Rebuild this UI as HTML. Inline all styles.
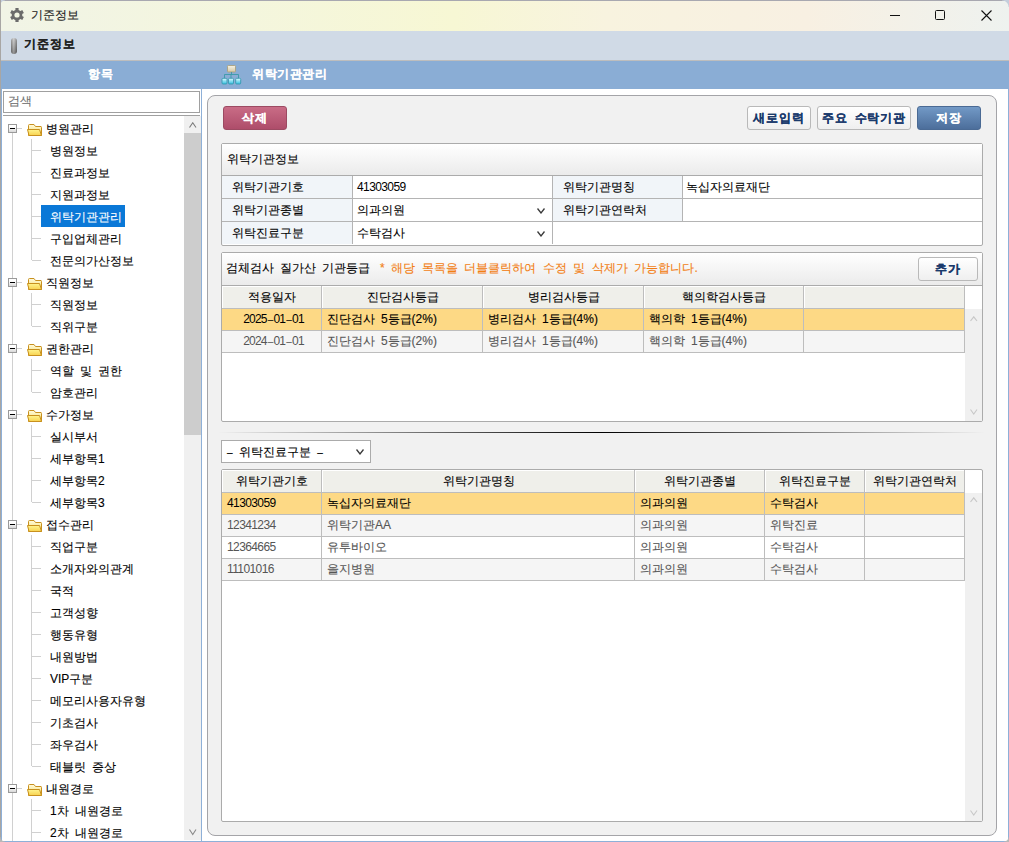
<!DOCTYPE html>
<html><head><meta charset="utf-8"><style>
*{margin:0;padding:0;box-sizing:border-box}
html,body{width:1009px;height:842px;overflow:hidden;background:#fff}
body{position:relative;font-family:"Liberation Sans",sans-serif;font-size:12px;color:#000;word-spacing:2.6px}
.a{position:absolute}
.t{position:absolute;white-space:nowrap;line-height:14px;-webkit-text-stroke:0.12px currentColor}
.b{font-weight:bold;letter-spacing:0.5px}
.btn{position:absolute;height:24px;border-radius:3px;font-weight:bold;text-align:center;line-height:22px;white-space:nowrap;letter-spacing:0.8px;-webkit-text-stroke:0.2px currentColor}
.bw{background:linear-gradient(#ffffff,#efefef);border:1px solid #b9b9b9;color:#1a3a6c}
.lbl{position:absolute;background:#f1f5f9}
.hl{position:absolute;background:#b4b4b4}
.gh{position:absolute;background:#efefea;border-top:1px solid #fff;border-left:1px solid #fff}
.c{text-align:center}
.num{letter-spacing:-0.6px;-webkit-text-stroke:0}
.dt{letter-spacing:-0.8px;-webkit-text-stroke:0}
.hy{font-size:10px;vertical-align:0.5px}
.dt .hy{margin:0 1px}
</style></head><body>
<div class="a" style="left:0px;top:0px;width:1009px;height:31px;background:linear-gradient(90deg,#f1f4e6 0%,#f4f6dd 25%,#f7f7d4 45%,#f8f3df 60%,#f8f0e2 80%,#eef2ef 100%);"></div>
<div class="a" style="left:0px;top:0px;width:1009px;height:1px;background:#a8a8b0;"></div>
<div class="a" style="left:0;top:0;width:5px;height:5px;background:radial-gradient(circle at 5px 5px,transparent 4px,#c4cedc 5px)"></div>
<div class="a" style="left:1002px;top:0;width:7px;height:7px;background:radial-gradient(circle at 0 7px,transparent 6px,#c4cedc 7px)"></div>
<div class="a" style="left:0px;top:31px;width:1009px;height:29px;background:#d0dae6;"></div>
<div class="a" style="left:0px;top:60px;width:1009px;height:1px;background:#bdbdbd;"></div>
<div class="a" style="left:0px;top:61px;width:1009px;height:28px;background:#8aadd5;"></div>
<div class="a" style="left:0px;top:89px;width:201px;height:752px;background:#fff;"></div>
<div class="a" style="left:3px;top:91px;width:197px;height:22px;background:#fff;border:1px solid #a0a0a0"></div>
<div class="a" style="left:3px;top:115px;width:197px;height:1px;background:#a0a0a0;"></div>
<div class="a" style="left:184px;top:116px;width:17px;height:724px;background:#f0f0f0;"></div>
<div class="a" style="left:184px;top:133px;width:17px;height:302px;background:#cdcdcd;"></div>
<div class="a" style="left:201px;top:89px;width:1px;height:752px;background:#8eb0d8;"></div>
<div class="a" style="left:202px;top:89px;width:806px;height:752px;background:#fff;"></div>
<div class="a" style="left:207px;top:95px;width:790px;height:741px;background:#f1f1f1;border:1px solid #a4a4a8;border-radius:8px"></div>
<div class="a" style="left:0px;top:0px;width:1px;height:842px;background:#a8a6a4;"></div>
<div class="a" style="left:1px;top:89px;width:1px;height:752px;background:#8eb0d8;"></div>
<div class="a" style="left:0px;top:841px;width:1009px;height:1px;background:#8eb0d8;"></div>
<div class="a" style="left:1008px;top:89px;width:1px;height:753px;background:#8eb0d8;"></div>
<div class="a" style="left:1004px;top:837px;width:5px;height:5px;background:radial-gradient(circle at 0 0,transparent 4px,#b8b8b8 5px)"></div>
<div class="a" style="left:0;top:837px;width:5px;height:5px;background:radial-gradient(circle at 5px 0,transparent 4px,#b8b8b8 5px)"></div>
<div class="t " style="left:31px;top:8px;color:#1a1a1a">기준정보</div>
<div class="t b" style="left:24px;top:37px;color:#222;letter-spacing:1px">기준정보</div>
<div class="t c b" style="left:0px;top:67px;width:201px;color:#fff">항목</div>
<div class="t b" style="left:252px;top:67px;color:#fff">위탁기관관리</div>
<div class="t " style="left:8px;top:94px;color:#707070">검색</div>
<div class="btn" style="left:223px;top:106px;width:64px;background:linear-gradient(#c96c86,#ae4d6a);border:1px solid #9c4a62;color:#fff">삭제</div>
<div class="btn bw" style="left:747px;top:106px;width:64px">새로입력</div>
<div class="btn bw" style="left:817px;top:106px;width:94px">주요 수탁기관</div>
<div class="btn" style="left:917px;top:106px;width:64px;background:linear-gradient(#7299c6,#4c6e9b);border:1px solid #4a6a94;color:#fff">저장</div>
<div class="a" style="left:221px;top:143px;width:762px;height:103px;background:#fff;border:1px solid #ababab;border-radius:2px"></div>
<div class="a" style="left:222px;top:144px;width:760px;height:31px;background:linear-gradient(#ffffff,#ebebeb);"></div>
<div class="a" style="left:222px;top:175px;width:760px;height:1px;background:#ababab;"></div>
<div class="t " style="left:227px;top:152px;">위탁기관정보</div>
<div class="a" style="left:222px;top:176px;width:130px;height:68px;background:#f1f5f9;"></div>
<div class="a" style="left:553px;top:176px;width:129px;height:45px;background:#f1f5f9;"></div>
<div class="a" style="left:222px;top:198px;width:760px;height:1px;background:#b4b4b4;"></div>
<div class="a" style="left:222px;top:221px;width:760px;height:1px;background:#b4b4b4;"></div>
<div class="a" style="left:352px;top:176px;width:1px;height:68px;background:#b4b4b4;"></div>
<div class="a" style="left:552px;top:176px;width:1px;height:68px;background:#b4b4b4;"></div>
<div class="a" style="left:682px;top:176px;width:1px;height:45px;background:#b4b4b4;"></div>
<div class="t " style="left:232px;top:180px;">위탁기관기호</div>
<div class="t num" style="left:357px;top:180px;">41303059</div>
<div class="t " style="left:563px;top:180px;">위탁기관명칭</div>
<div class="t " style="left:686px;top:180px;">녹십자의료재단</div>
<div class="t " style="left:232px;top:203px;">위탁기관종별</div>
<div class="t " style="left:357px;top:203px;">의과의원</div>
<div class="t " style="left:563px;top:203px;">위탁기관연락처</div>
<div class="t " style="left:232px;top:226px;">위탁진료구분</div>
<div class="t " style="left:357px;top:226px;">수탁검사</div>
<svg class="a" style="left:537px;top:208px" width="8" height="6" viewBox="0 0 8 6"><path d="M0.5 0.5 L4.0 5 L7.5 0.5" fill="none" stroke="#3a3a3a" stroke-width="1.3"/></svg>
<svg class="a" style="left:537px;top:231px" width="8" height="6" viewBox="0 0 8 6"><path d="M0.5 0.5 L4.0 5 L7.5 0.5" fill="none" stroke="#3a3a3a" stroke-width="1.3"/></svg>
<div class="a" style="left:221px;top:252px;width:762px;height:170px;background:#fff;border:1px solid #ababab;border-radius:2px"></div>
<div class="a" style="left:222px;top:253px;width:760px;height:32px;background:linear-gradient(#ffffff,#ebebeb);"></div>
<div class="a" style="left:222px;top:285px;width:760px;height:1px;background:#ababab;"></div>
<div class="t " style="left:226px;top:261px;">검체검사 질가산 기관등급</div>
<div class="t " style="left:380px;top:261px;color:#f27e14;word-spacing:3.2px">* 해당 목록을 더블클릭하여 수정 및 삭제가 가능합니다.</div>
<div class="btn bw" style="left:918px;top:257px;width:60px">추가</div>
<div class="gh" style="left:222px;top:286px;width:99px;height:22px"></div>
<div class="gh" style="left:322px;top:286px;width:160px;height:22px"></div>
<div class="gh" style="left:483px;top:286px;width:160px;height:22px"></div>
<div class="gh" style="left:644px;top:286px;width:159px;height:22px"></div>
<div class="gh" style="left:804px;top:286px;width:160px;height:22px"></div>
<div class="a" style="left:321px;top:286px;width:1px;height:67px;background:#bdbdbd;"></div>
<div class="a" style="left:482px;top:286px;width:1px;height:67px;background:#bdbdbd;"></div>
<div class="a" style="left:643px;top:286px;width:1px;height:67px;background:#bdbdbd;"></div>
<div class="a" style="left:803px;top:286px;width:1px;height:67px;background:#bdbdbd;"></div>
<div class="a" style="left:964px;top:286px;width:1px;height:67px;background:#bdbdbd;"></div>
<div class="a" style="left:222px;top:308px;width:743px;height:1px;background:#bdbdbd;"></div>
<div class="a" style="left:222px;top:309px;width:743px;height:21px;background:#fdd985;"></div>
<div class="a" style="left:222px;top:330px;width:743px;height:1px;background:#bdbdbd;"></div>
<div class="a" style="left:222px;top:331px;width:743px;height:21px;background:#f5f5f5;"></div>
<div class="a" style="left:222px;top:352px;width:743px;height:1px;background:#bdbdbd;"></div>
<div class="a" style="left:321px;top:309px;width:1px;height:43px;background:#bdbdbd;"></div>
<div class="a" style="left:482px;top:309px;width:1px;height:43px;background:#bdbdbd;"></div>
<div class="a" style="left:643px;top:309px;width:1px;height:43px;background:#bdbdbd;"></div>
<div class="a" style="left:803px;top:309px;width:1px;height:43px;background:#bdbdbd;"></div>
<div class="a" style="left:964px;top:309px;width:1px;height:43px;background:#bdbdbd;"></div>
<div class="a" style="left:965px;top:309px;width:17px;height:112px;background:#f0f0f0;"></div>
<div class="t c " style="left:222px;top:290px;width:100px;">적용일자</div>
<div class="t c " style="left:322px;top:290px;width:161px;">진단검사등급</div>
<div class="t c " style="left:483px;top:290px;width:161px;">병리검사등급</div>
<div class="t c " style="left:644px;top:290px;width:160px;">핵의학검사등급</div>
<div class="t c " style="left:804px;top:290px;width:161px;"></div>
<div class="t c dt" style="left:223px;top:312px;width:101px;">2025<span class="hy">–</span>01<span class="hy">–</span>01</div>
<div class="t " style="left:327px;top:312px;">진단검사 5등급(2%)</div>
<div class="t " style="left:488px;top:312px;">병리검사 1등급(4%)</div>
<div class="t " style="left:649px;top:312px;">핵의학 1등급(4%)</div>
<div class="t c dt" style="left:223px;top:334px;width:101px;color:#555">2024<span class="hy">–</span>01<span class="hy">–</span>01</div>
<div class="t " style="left:327px;top:334px;color:#555">진단검사 5등급(2%)</div>
<div class="t " style="left:488px;top:334px;color:#555">병리검사 1등급(4%)</div>
<div class="t " style="left:649px;top:334px;color:#555">핵의학 1등급(4%)</div>
<div class="a" style="left:218px;top:432px;width:767px;height:1px;background:linear-gradient(90deg,rgba(0,0,0,0),#000 50%,rgba(0,0,0,0));"></div>
<div class="a" style="left:221px;top:440px;width:150px;height:23px;background:#fff;border:1px solid #ababab"></div>
<div class="t " style="left:227px;top:445px;word-spacing:3px"><span class="hy">–</span> 위탁진료구분 <span class="hy">–</span></div>
<svg class="a" style="left:356px;top:449px" width="8" height="6" viewBox="0 0 8 6"><path d="M0.5 0.5 L4.0 5 L7.5 0.5" fill="none" stroke="#3a3a3a" stroke-width="1.3"/></svg>
<div class="a" style="left:221px;top:469px;width:762px;height:353px;background:#fff;border:1px solid #ababab;border-radius:2px"></div>
<div class="gh" style="left:222px;top:470px;width:99px;height:22px"></div>
<div class="gh" style="left:322px;top:470px;width:312px;height:22px"></div>
<div class="gh" style="left:635px;top:470px;width:129px;height:22px"></div>
<div class="gh" style="left:765px;top:470px;width:99px;height:22px"></div>
<div class="gh" style="left:865px;top:470px;width:99px;height:22px"></div>
<div class="a" style="left:321px;top:470px;width:1px;height:111px;background:#bdbdbd;"></div>
<div class="a" style="left:634px;top:470px;width:1px;height:111px;background:#bdbdbd;"></div>
<div class="a" style="left:764px;top:470px;width:1px;height:111px;background:#bdbdbd;"></div>
<div class="a" style="left:864px;top:470px;width:1px;height:111px;background:#bdbdbd;"></div>
<div class="a" style="left:964px;top:470px;width:1px;height:111px;background:#bdbdbd;"></div>
<div class="a" style="left:222px;top:492px;width:743px;height:1px;background:#bdbdbd;"></div>
<div class="a" style="left:222px;top:493px;width:743px;height:21px;background:#fdd985;"></div>
<div class="a" style="left:222px;top:514px;width:743px;height:1px;background:#bdbdbd;"></div>
<div class="a" style="left:222px;top:515px;width:743px;height:21px;background:#f5f5f5;"></div>
<div class="a" style="left:222px;top:536px;width:743px;height:1px;background:#bdbdbd;"></div>
<div class="a" style="left:222px;top:537px;width:743px;height:21px;background:#ffffff;"></div>
<div class="a" style="left:222px;top:558px;width:743px;height:1px;background:#bdbdbd;"></div>
<div class="a" style="left:222px;top:559px;width:743px;height:21px;background:#f5f5f5;"></div>
<div class="a" style="left:222px;top:580px;width:743px;height:1px;background:#bdbdbd;"></div>
<div class="a" style="left:321px;top:493px;width:1px;height:88px;background:#bdbdbd;"></div>
<div class="a" style="left:634px;top:493px;width:1px;height:88px;background:#bdbdbd;"></div>
<div class="a" style="left:764px;top:493px;width:1px;height:88px;background:#bdbdbd;"></div>
<div class="a" style="left:864px;top:493px;width:1px;height:88px;background:#bdbdbd;"></div>
<div class="a" style="left:964px;top:493px;width:1px;height:88px;background:#bdbdbd;"></div>
<div class="t c " style="left:222px;top:474px;width:100px;">위탁기관기호</div>
<div class="t c " style="left:322px;top:474px;width:313px;">위탁기관명칭</div>
<div class="t c " style="left:635px;top:474px;width:130px;">위탁기관종별</div>
<div class="t c " style="left:765px;top:474px;width:100px;">위탁진료구분</div>
<div class="t c " style="left:865px;top:474px;width:100px;">위탁기관연락처</div>
<div class="t num" style="left:227px;top:496px;">41303059</div>
<div class="t " style="left:327px;top:496px;">녹십자의료재단</div>
<div class="t " style="left:640px;top:496px;">의과의원</div>
<div class="t " style="left:770px;top:496px;">수탁검사</div>
<div class="t num" style="left:227px;top:518px;color:#555">12341234</div>
<div class="t " style="left:327px;top:518px;color:#555">위탁기관AA</div>
<div class="t " style="left:640px;top:518px;color:#555">의과의원</div>
<div class="t " style="left:770px;top:518px;color:#555">위탁진료</div>
<div class="t num" style="left:227px;top:540px;color:#555">12364665</div>
<div class="t " style="left:327px;top:540px;color:#555">유투바이오</div>
<div class="t " style="left:640px;top:540px;color:#555">의과의원</div>
<div class="t " style="left:770px;top:540px;color:#555">수탁검사</div>
<div class="t num" style="left:227px;top:562px;color:#555">11101016</div>
<div class="t " style="left:327px;top:562px;color:#555">을지병원</div>
<div class="t " style="left:640px;top:562px;color:#555">의과의원</div>
<div class="t " style="left:770px;top:562px;color:#555">수탁검사</div>
<div class="a" style="left:965px;top:493px;width:17px;height:328px;background:#f0f0f0;"></div>
<svg width="0" height="0" style="position:absolute"><defs><linearGradient id="fb" x1="0" y1="0" x2="0" y2="1"><stop offset="0" stop-color="#fffbe0"/><stop offset="1" stop-color="#f6dc60"/></linearGradient><linearGradient id="ff" x1="0" y1="0" x2="0" y2="1"><stop offset="0" stop-color="#fff48e"/><stop offset="1" stop-color="#f7d250"/></linearGradient></defs></svg>
<div class="a" style="left:12px;top:133px;width:1px;height:708px;background:#d0d0d0;"></div>
<div class="a" style="left:8px;top:124px;width:9px;height:9px;border:1px solid #9a9a9a;background:linear-gradient(#fff 30%,#d8d8d8)"></div>
<div class="a" style="left:10px;top:128px;width:5px;height:1px;background:#000;"></div>
<div class="a" style="left:17px;top:128px;width:5px;height:1px;background:#d0d0d0;"></div>
<svg class="a" style="left:27px;top:123px" width="16" height="14" viewBox="0 0 16 14"><path d="M1.5 12.5 V2.5 Q1.5 1.5 2.5 1.5 H7 L8.5 3.5 H14 Q14.5 3.5 14.5 4.5 V12.5 Z" fill="url(#fb)" stroke="#c8901e" stroke-width="1"/><path d="M0.5 6.5 H12.5 L14.5 12.5 H2 Z" fill="url(#ff)" stroke="#c8901e" stroke-width="1" stroke-linejoin="round"/></svg>
<div class="a" style="left:31px;top:139px;width:1px;height:121px;background:#d0d0d0;"></div>
<div class="a" style="left:32px;top:150px;width:9px;height:1px;background:#d0d0d0;"></div>
<div class="a" style="left:32px;top:172px;width:9px;height:1px;background:#d0d0d0;"></div>
<div class="a" style="left:32px;top:194px;width:9px;height:1px;background:#d0d0d0;"></div>
<div class="a" style="left:32px;top:216px;width:9px;height:1px;background:#d0d0d0;"></div>
<div class="a" style="left:32px;top:238px;width:9px;height:1px;background:#d0d0d0;"></div>
<div class="a" style="left:32px;top:260px;width:9px;height:1px;background:#d0d0d0;"></div>
<div class="a" style="left:8px;top:278px;width:9px;height:9px;border:1px solid #9a9a9a;background:linear-gradient(#fff 30%,#d8d8d8)"></div>
<div class="a" style="left:10px;top:282px;width:5px;height:1px;background:#000;"></div>
<div class="a" style="left:17px;top:282px;width:5px;height:1px;background:#d0d0d0;"></div>
<svg class="a" style="left:27px;top:277px" width="16" height="14" viewBox="0 0 16 14"><path d="M1.5 12.5 V2.5 Q1.5 1.5 2.5 1.5 H7 L8.5 3.5 H14 Q14.5 3.5 14.5 4.5 V12.5 Z" fill="url(#fb)" stroke="#c8901e" stroke-width="1"/><path d="M0.5 6.5 H12.5 L14.5 12.5 H2 Z" fill="url(#ff)" stroke="#c8901e" stroke-width="1" stroke-linejoin="round"/></svg>
<div class="a" style="left:31px;top:293px;width:1px;height:33px;background:#d0d0d0;"></div>
<div class="a" style="left:32px;top:304px;width:9px;height:1px;background:#d0d0d0;"></div>
<div class="a" style="left:32px;top:326px;width:9px;height:1px;background:#d0d0d0;"></div>
<div class="a" style="left:8px;top:344px;width:9px;height:9px;border:1px solid #9a9a9a;background:linear-gradient(#fff 30%,#d8d8d8)"></div>
<div class="a" style="left:10px;top:348px;width:5px;height:1px;background:#000;"></div>
<div class="a" style="left:17px;top:348px;width:5px;height:1px;background:#d0d0d0;"></div>
<svg class="a" style="left:27px;top:343px" width="16" height="14" viewBox="0 0 16 14"><path d="M1.5 12.5 V2.5 Q1.5 1.5 2.5 1.5 H7 L8.5 3.5 H14 Q14.5 3.5 14.5 4.5 V12.5 Z" fill="url(#fb)" stroke="#c8901e" stroke-width="1"/><path d="M0.5 6.5 H12.5 L14.5 12.5 H2 Z" fill="url(#ff)" stroke="#c8901e" stroke-width="1" stroke-linejoin="round"/></svg>
<div class="a" style="left:31px;top:359px;width:1px;height:33px;background:#d0d0d0;"></div>
<div class="a" style="left:32px;top:370px;width:9px;height:1px;background:#d0d0d0;"></div>
<div class="a" style="left:32px;top:392px;width:9px;height:1px;background:#d0d0d0;"></div>
<div class="a" style="left:8px;top:410px;width:9px;height:9px;border:1px solid #9a9a9a;background:linear-gradient(#fff 30%,#d8d8d8)"></div>
<div class="a" style="left:10px;top:414px;width:5px;height:1px;background:#000;"></div>
<div class="a" style="left:17px;top:414px;width:5px;height:1px;background:#d0d0d0;"></div>
<svg class="a" style="left:27px;top:409px" width="16" height="14" viewBox="0 0 16 14"><path d="M1.5 12.5 V2.5 Q1.5 1.5 2.5 1.5 H7 L8.5 3.5 H14 Q14.5 3.5 14.5 4.5 V12.5 Z" fill="url(#fb)" stroke="#c8901e" stroke-width="1"/><path d="M0.5 6.5 H12.5 L14.5 12.5 H2 Z" fill="url(#ff)" stroke="#c8901e" stroke-width="1" stroke-linejoin="round"/></svg>
<div class="a" style="left:31px;top:425px;width:1px;height:77px;background:#d0d0d0;"></div>
<div class="a" style="left:32px;top:436px;width:9px;height:1px;background:#d0d0d0;"></div>
<div class="a" style="left:32px;top:458px;width:9px;height:1px;background:#d0d0d0;"></div>
<div class="a" style="left:32px;top:480px;width:9px;height:1px;background:#d0d0d0;"></div>
<div class="a" style="left:32px;top:502px;width:9px;height:1px;background:#d0d0d0;"></div>
<div class="a" style="left:8px;top:520px;width:9px;height:9px;border:1px solid #9a9a9a;background:linear-gradient(#fff 30%,#d8d8d8)"></div>
<div class="a" style="left:10px;top:524px;width:5px;height:1px;background:#000;"></div>
<div class="a" style="left:17px;top:524px;width:5px;height:1px;background:#d0d0d0;"></div>
<svg class="a" style="left:27px;top:519px" width="16" height="14" viewBox="0 0 16 14"><path d="M1.5 12.5 V2.5 Q1.5 1.5 2.5 1.5 H7 L8.5 3.5 H14 Q14.5 3.5 14.5 4.5 V12.5 Z" fill="url(#fb)" stroke="#c8901e" stroke-width="1"/><path d="M0.5 6.5 H12.5 L14.5 12.5 H2 Z" fill="url(#ff)" stroke="#c8901e" stroke-width="1" stroke-linejoin="round"/></svg>
<div class="a" style="left:31px;top:535px;width:1px;height:231px;background:#d0d0d0;"></div>
<div class="a" style="left:32px;top:546px;width:9px;height:1px;background:#d0d0d0;"></div>
<div class="a" style="left:32px;top:568px;width:9px;height:1px;background:#d0d0d0;"></div>
<div class="a" style="left:32px;top:590px;width:9px;height:1px;background:#d0d0d0;"></div>
<div class="a" style="left:32px;top:612px;width:9px;height:1px;background:#d0d0d0;"></div>
<div class="a" style="left:32px;top:634px;width:9px;height:1px;background:#d0d0d0;"></div>
<div class="a" style="left:32px;top:656px;width:9px;height:1px;background:#d0d0d0;"></div>
<div class="a" style="left:32px;top:678px;width:9px;height:1px;background:#d0d0d0;"></div>
<div class="a" style="left:32px;top:700px;width:9px;height:1px;background:#d0d0d0;"></div>
<div class="a" style="left:32px;top:722px;width:9px;height:1px;background:#d0d0d0;"></div>
<div class="a" style="left:32px;top:744px;width:9px;height:1px;background:#d0d0d0;"></div>
<div class="a" style="left:32px;top:766px;width:9px;height:1px;background:#d0d0d0;"></div>
<div class="a" style="left:8px;top:784px;width:9px;height:9px;border:1px solid #9a9a9a;background:linear-gradient(#fff 30%,#d8d8d8)"></div>
<div class="a" style="left:10px;top:788px;width:5px;height:1px;background:#000;"></div>
<div class="a" style="left:17px;top:788px;width:5px;height:1px;background:#d0d0d0;"></div>
<svg class="a" style="left:27px;top:783px" width="16" height="14" viewBox="0 0 16 14"><path d="M1.5 12.5 V2.5 Q1.5 1.5 2.5 1.5 H7 L8.5 3.5 H14 Q14.5 3.5 14.5 4.5 V12.5 Z" fill="url(#fb)" stroke="#c8901e" stroke-width="1"/><path d="M0.5 6.5 H12.5 L14.5 12.5 H2 Z" fill="url(#ff)" stroke="#c8901e" stroke-width="1" stroke-linejoin="round"/></svg>
<div class="a" style="left:31px;top:799px;width:1px;height:42px;background:#d0d0d0;"></div>
<div class="a" style="left:32px;top:810px;width:9px;height:1px;background:#d0d0d0;"></div>
<div class="a" style="left:32px;top:832px;width:9px;height:1px;background:#d0d0d0;"></div>
<div class="t " style="left:46px;top:122px;">병원관리</div>
<div class="t " style="left:50px;top:144px;">병원정보</div>
<div class="t " style="left:50px;top:166px;">진료과정보</div>
<div class="t " style="left:50px;top:188px;">지원과정보</div>
<div class="a" style="left:41px;top:205px;width:84px;height:22px;background:#0a78d7;"></div>
<div class="t " style="left:50px;top:210px;color:#fff;-webkit-text-stroke:0.12px #fff">위탁기관관리</div>
<div class="t " style="left:50px;top:232px;">구입업체관리</div>
<div class="t " style="left:50px;top:254px;">전문의가산정보</div>
<div class="t " style="left:46px;top:276px;">직원정보</div>
<div class="t " style="left:50px;top:298px;">직원정보</div>
<div class="t " style="left:50px;top:320px;">직위구분</div>
<div class="t " style="left:46px;top:342px;">권한관리</div>
<div class="t " style="left:50px;top:364px;">역할 및 권한</div>
<div class="t " style="left:50px;top:386px;">암호관리</div>
<div class="t " style="left:46px;top:408px;">수가정보</div>
<div class="t " style="left:50px;top:430px;">실시부서</div>
<div class="t " style="left:50px;top:452px;">세부항목1</div>
<div class="t " style="left:50px;top:474px;">세부항목2</div>
<div class="t " style="left:50px;top:496px;">세부항목3</div>
<div class="t " style="left:46px;top:518px;">접수관리</div>
<div class="t " style="left:50px;top:540px;">직업구분</div>
<div class="t " style="left:50px;top:562px;">소개자와의관계</div>
<div class="t " style="left:50px;top:584px;">국적</div>
<div class="t " style="left:50px;top:606px;">고객성향</div>
<div class="t " style="left:50px;top:628px;">행동유형</div>
<div class="t " style="left:50px;top:650px;">내원방법</div>
<div class="t " style="left:50px;top:672px;">VIP구분</div>
<div class="t " style="left:50px;top:694px;">메모리사용자유형</div>
<div class="t " style="left:50px;top:716px;">기초검사</div>
<div class="t " style="left:50px;top:738px;">좌우검사</div>
<div class="t " style="left:50px;top:760px;">태블릿 증상</div>
<div class="t " style="left:46px;top:782px;">내원경로</div>
<div class="t " style="left:50px;top:804px;">1차 내원경로</div>
<div class="t " style="left:50px;top:826px;">2차 내원경로</div>
<svg class="a" style="left:189px;top:122px" width="7.5" height="6.5" viewBox="0 0 7.5 6.5"><path d="M0.5 5.5 L3.75 0.8 L7.0 5.5" fill="none" stroke="#7a7a7a" stroke-width="1.1"/></svg>
<svg class="a" style="left:189px;top:829px" width="7.5" height="6.5" viewBox="0 0 7.5 6.5"><path d="M0.5 0.5 L3.75 5.5 L7.0 0.5" fill="none" stroke="#8a8a8a" stroke-width="1.1"/></svg>
<svg class="a" style="left:970px;top:316px" width="7.5" height="6" viewBox="0 0 7.5 6"><path d="M0.5 5 L3.75 0.8 L7.0 5" fill="none" stroke="#c8c8c8" stroke-width="1.2"/></svg>
<svg class="a" style="left:970px;top:409px" width="7.5" height="6" viewBox="0 0 7.5 6"><path d="M0.5 0.5 L3.75 5 L7.0 0.5" fill="none" stroke="#c8c8c8" stroke-width="1.1"/></svg>
<svg class="a" style="left:970px;top:497px" width="7.5" height="6" viewBox="0 0 7.5 6"><path d="M0.5 5 L3.75 0.8 L7.0 5" fill="none" stroke="#c8c8c8" stroke-width="1.2"/></svg>
<svg class="a" style="left:970px;top:810px" width="7.5" height="6" viewBox="0 0 7.5 6"><path d="M0.5 0.5 L3.75 5 L7.0 0.5" fill="none" stroke="#c8c8c8" stroke-width="1.1"/></svg>
<svg class="a" style="left:10px;top:8px" width="14" height="14" viewBox="0 0 14 14"><g fill="#6b6b6b"><circle cx="7" cy="7" r="5.3"/><rect x="5.4" y="0" width="3.2" height="14"/><rect x="5.4" y="0" width="3.2" height="14" transform="rotate(60 7 7)"/><rect x="5.4" y="0" width="3.2" height="14" transform="rotate(120 7 7)"/></g><circle cx="7" cy="7" r="2.6" fill="#f2f5e3"/></svg>
<div class="a" style="left:11px;top:38px;width:6px;height:16px;background:linear-gradient(rgba(255,255,255,0.25),rgba(0,0,0,0.25)),linear-gradient(90deg,#7a7a7a,#c4c4c4 45%,#8a8a8a 80%,#6a6a6a);border-radius:3px"></div>
<div class="a" style="left:890px;top:15px;width:10px;height:1px;background:#111;"></div>
<div class="a" style="left:935px;top:10px;width:10px;height:10px;background:transparent;border:1px solid #111;border-radius:1.5px"></div>
<svg class="a" style="left:981px;top:10px" width="11" height="11" viewBox="0 0 11 11"><path d="M0.5 0.5 L10.5 10.5 M10.5 0.5 L0.5 10.5" stroke="#111" stroke-width="1.1"/></svg>
<svg class="a" style="left:221px;top:64px" width="22" height="22" viewBox="0 0 22 22">
<defs><linearGradient id="bg1" x1="0" y1="0" x2="0" y2="1"><stop offset="0" stop-color="#f6f2e4"/><stop offset="1" stop-color="#d4c8a4"/></linearGradient>
<linearGradient id="bg2" x1="0" y1="0" x2="0" y2="1"><stop offset="0" stop-color="#e0faff"/><stop offset="1" stop-color="#30c0e0"/></linearGradient></defs>
<rect x="6.5" y="1.5" width="8" height="6.5" rx="0.8" fill="url(#bg1)" stroke="#a8a080" stroke-width="0.9"/>
<path d="M10.5 8 V10.5 M3.5 14 V10.5 H17.5 V14 M10 10.5 V14" stroke="#3a9aa8" stroke-width="0.9" fill="none"/>
<rect x="1" y="14.3" width="5" height="5.7" rx="1" fill="url(#bg2)" stroke="#3898b0" stroke-width="0.9"/>
<rect x="7.5" y="14.3" width="5" height="5.7" rx="1" fill="url(#bg2)" stroke="#3898b0" stroke-width="0.9"/>
<rect x="14.7" y="14.3" width="5" height="5.7" rx="1" fill="url(#bg2)" stroke="#3898b0" stroke-width="0.9"/>
</svg>
</body></html>
